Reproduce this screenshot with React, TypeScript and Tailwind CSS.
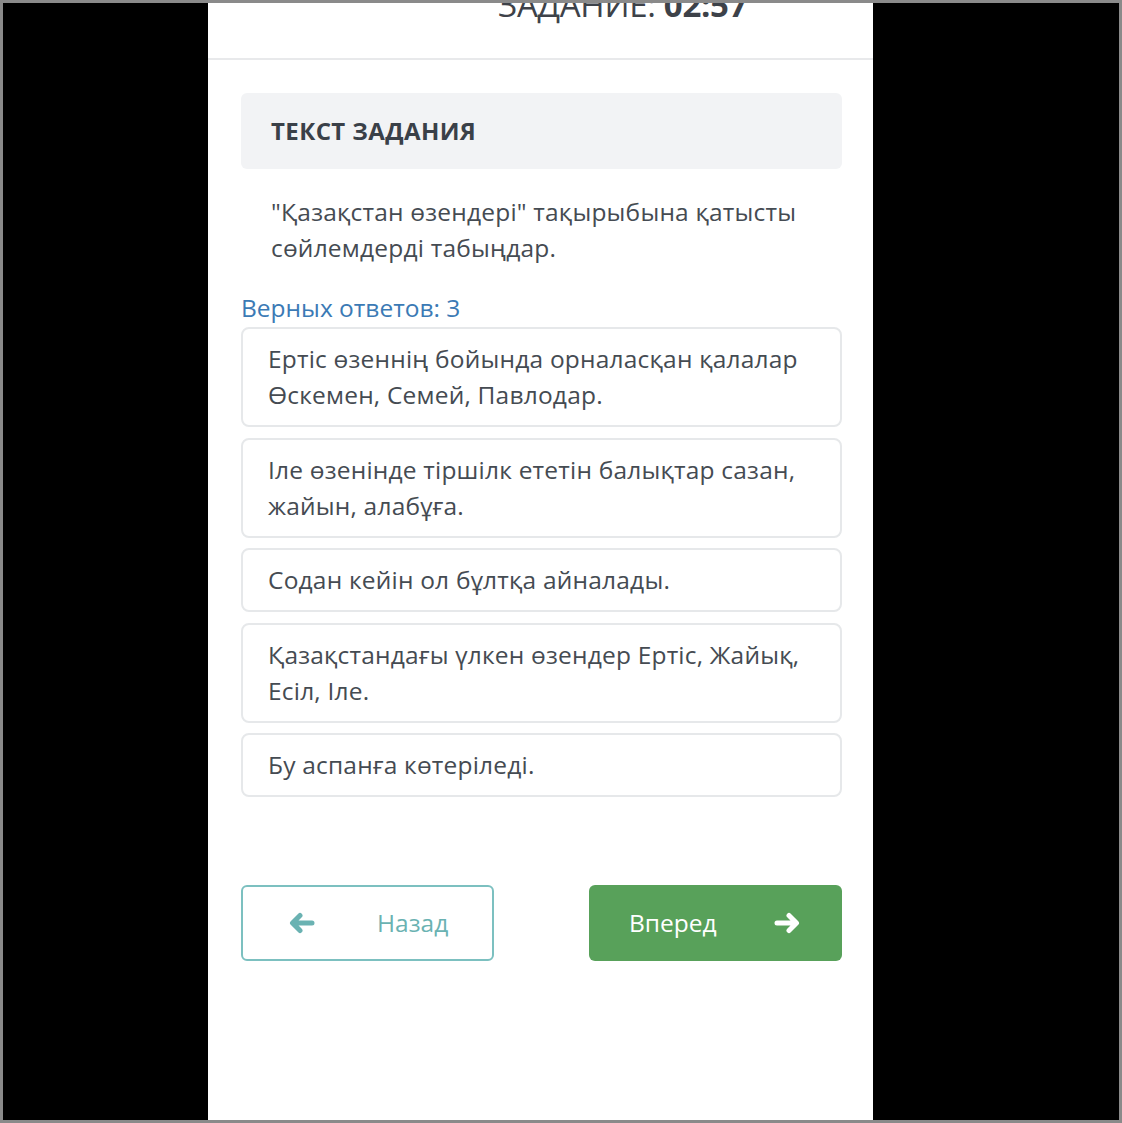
const answers = [
  'Ертіс өзеннің бойында орналасқан қалалар Өскемен, Семей, Павлодар.',
  'Іле өзенінде тіршілк ететін балықтар сазан, жайын, алабұға.',
  'Содан кейін ол бұлтқа айналады.',
  'Қазақстандағы үлкен өзендер Ертіс, Жайық, Есіл, Іле.',
  'Бу аспанға көтеріледі.',
];

function Arrow({ dir, className }: { dir: 'left' | 'right'; className?: string }) {
  return (
    <svg viewBox="0 0 26 22" className={className} fill="none" stroke="currentColor" strokeWidth="5" strokeLinecap="round" strokeLinejoin="round">
      {dir === 'left' ? (
        <path d="M23 11H4M11 3.5L3.5 11L11 18.5" />
      ) : (
        <path d="M3 11h19M15 3.5L22.5 11L15 18.5" />
      )}
    </svg>
  );
}

export default function App() {
  return (
    <div
      className="w-[1122px] h-[1123px] bg-black border-[3px] border-[#8a8a8a] overflow-hidden"
      style={{ fontFamily: '"Open Sans", "Noto Sans", sans-serif' }}
    >
      <div className="ml-[205px] w-[665px] h-full bg-white flex flex-col">
        {/* Header */}
        <div className="h-[57px] overflow-hidden border-b-2 border-[#e8e9eb]">
          <div className="-mt-[18px] pl-[290px] text-[33px] leading-[40px] text-[#3d4249] tracking-[-0.3px] whitespace-nowrap">
            ЗАДАНИЕ: <span className="font-bold">02:57</span>
          </div>
        </div>

        <div className="pl-[33px] pr-[31px] pt-[33px]">
          <div className="h-[76px] rounded-md bg-[#f2f3f5] flex items-center px-[30px]">
            <h2 className="text-[24px] font-bold text-[#3a4048] tracking-[0.4px]">ТЕКСТ ЗАДАНИЯ</h2>
          </div>

          <p className="mt-[25px] px-[30px] text-[24.5px] leading-[36px] text-[#454b52] tracking-[0.2px]">
            "Қазақстан өзендері" тақырыбына қатысты сөйлемдерді табыңдар.
          </p>

          <div className="mt-[24px] text-[24.5px] leading-[36px] text-[#3b7ab5]">Верных ответов: 3</div>

          <div className="mt-[1px] flex flex-col gap-[10.5px]">
            {answers.map((a) => (
              <div
                key={a}
                className="border-2 border-[#e6e8ea] rounded-lg pl-[25px] pr-[28px] py-[12px] text-[24.5px] leading-[36px] text-[#454b52] tracking-[0.2px]"
              >
                {a}
              </div>
            ))}
          </div>

          <div className="mt-[88px] flex justify-between">
            <button className="w-[253px] h-[76px] border-2 border-[#7cc0c0] rounded-md flex items-center pl-[46px] text-[#6ab2b2] text-[24.5px]">
              <Arrow dir="left" className="w-[26px] h-[22px]" />
              <span className="ml-[62px]">Назад</span>
            </button>
            <button className="w-[253px] h-[76px] bg-[#58a15a] rounded-md flex items-center pl-[40px] text-white text-[24.5px]">
              <span>Вперед</span>
              <Arrow dir="right" className="w-[26px] h-[22px] ml-[57px]" />
            </button>
          </div>
        </div>
      </div>
    </div>
  );
}
